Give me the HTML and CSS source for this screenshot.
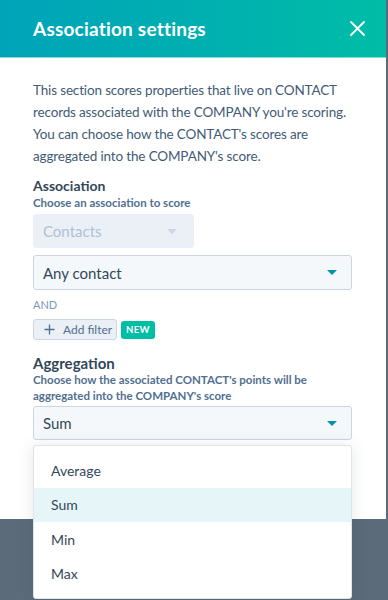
FILE: index.html
```html
<!DOCTYPE html>
<html lang="en">
<head>
    <meta charset="UTF-8">
    <meta name="viewport" content="width=device-width, initial-scale=1.0">
    <title>Association settings</title>
    <link rel="stylesheet" href="styles.css">
</head>
<body>

    <div class="panel">
        <header class="panel-header">
            <h1>Association settings</h1>
            <button class="close" aria-label="Close">
                <svg width="15" height="15" viewBox="0 0 15 15">
                    <path d="M1 1 L14 14 M14 1 L1 14" stroke="#fff" stroke-width="1.8" stroke-linecap="round"/>
                </svg>
            </button>
        </header>

        <section class="panel-body">
            <p class="intro">This section scores properties that live on CONTACT records associated with the COMPANY you're scoring. You can choose how the CONTACT's scores are aggregated into the COMPANY's score.</p>

            <h2 class="field-label">Association</h2>
            <p class="field-help">Choose an association to score</p>
            <div class="select select-disabled">
                <span>Contacts</span>
                <span class="caret"></span>
            </div>
            <div class="select select-any">
                <span>Any contact</span>
                <span class="caret"></span>
            </div>

            <p class="and">AND</p>
            <div class="filter-row">
                <button class="add-filter">
                    <svg width="11" height="11" viewBox="0 0 11 11">
                        <path d="M5.5 0.5 V10.5 M0.5 5.5 H10.5" stroke="#516f90" stroke-width="1.3"/>
                    </svg>
                    Add filter
                </button>
                <span class="badge">NEW</span>
            </div>

            <h2 class="field-label agg">Aggregation</h2>
            <p class="field-help">Choose how the associated CONTACT's points will be aggregated into the COMPANY's score</p>
            <div class="select-wrap">
                <div class="select select-sum">
                    <span>Sum</span>
                    <span class="caret"></span>
                </div>
                <!-- open dropdown menu -->
                <ul class="menu">
                    <li>Average</li>
                    <li class="active">Sum</li>
                    <li>Min</li>
                    <li>Max</li>
                </ul>
            </div>
        </section>
    </div>

</body>
</html>
```

FILE: styles.css
```css
html, body {
    height: 100%;
}

body {
    margin: 0;
    background-color: #5b6b79; /* dim overlay behind the panel */
    font-family: 'Lato', 'Noto Sans', sans-serif;
    color: #33475b;
}

.panel {
    width: 386px;
    height: 519px;
    background-color: #fff;
}

.panel-header {
    height: 58px;
    display: flex;
    align-items: center;
    justify-content: space-between;
    padding: 0 21px 0 33px;
    background: linear-gradient(90deg, #00a4b9 0%, #00b0b0 55%, #00bda6 100%);
    border-bottom: 1px solid #8ad9d2;
    box-sizing: border-box;
}

.panel-header h1 {
    margin: 0;
    color: #fff;
    font-size: 19px;
    font-weight: 700;
    letter-spacing: 0.2px;
}

.close {
    background: none;
    border: none;
    padding: 0;
    display: flex;
    cursor: pointer;
}

.panel-body {
    padding: 21px 34px 0 33px;
}

.intro {
    margin: 0;
    font-size: 13.5px;
    letter-spacing: -0.15px;
    line-height: 22px;
    color: #425b76;
}

.field-label {
    margin: 10px 0 0;
    font-size: 14px;
    font-weight: 700;
    color: #33475b;
    line-height: 18px;
}

.field-label.agg {
    margin-top: 14px;
    font-size: 15px;
}

.field-help {
    margin: 0;
    font-size: 11.5px;
    font-weight: 700;
    line-height: 16px;
    color: #516f90;
}

.select {
    height: 35px;
    display: flex;
    align-items: center;
    justify-content: space-between;
    padding: 0 14px 0 9px;
    background-color: #f5f8fa;
    border: 1px solid #cbd6e2;
    border-radius: 3px;
    box-sizing: border-box;
    font-size: 15px;
    color: #33475b;
}

.select-disabled {
    width: 161px;
    height: 34px;
    margin-top: 3px;
    background-color: #eaf0f6;
    border-color: #eaf0f6;
    color: #b0c1d4;
    padding-right: 16px;
}

.select-any {
    margin-top: 7px;
}

.select-sum {
    height: 34px;
    margin-top: 2px;
}

.caret {
    width: 0;
    height: 0;
    border-left: 5px solid transparent;
    border-right: 5px solid transparent;
    border-top: 5px solid #0091ae;
}

.select-disabled .caret {
    border-top-color: #cbd6e2;
}

.and {
    margin: 8px 0 0;
    font-size: 11px;
    line-height: 14px;
    color: #7c98b6;
}

.filter-row {
    margin-top: 7px;
    display: flex;
    align-items: center;
    gap: 4px;
}

.add-filter {
    height: 21px;
    width: 84px;
    padding: 0 0 0 10px;
    background-color: #eaf0f6;
    border: 1px solid #cbd6e2;
    border-radius: 3px;
    font-family: inherit;
    font-size: 12px;
    color: #516f90;
    display: flex;
    align-items: center;
    gap: 8px;
}

.badge {
    height: 18px;
    width: 34px;
    justify-content: center;
    display: flex;
    align-items: center;
    background-color: #00bda5;
    color: #fff;
    font-size: 9.5px;
    font-weight: 700;
    border-radius: 3px;
    letter-spacing: 0.4px;
}

.select-wrap {
    position: relative;
}

.menu {
    position: absolute;
    z-index: 10;
    top: 39px;
    left: 0;
    right: 0;
    margin: 0;
    padding: 7px 0;
    list-style: none;
    background-color: #fff;
    border: 1px solid #dfe3eb;
    border-radius: 3px;
    box-shadow: 0 1px 16px rgba(45, 62, 80, 0.12);
}

.menu li {
    height: 34.5px;
    display: flex;
    align-items: center;
    padding-left: 17px;
    font-size: 14px;
    color: #33475b;
}

.menu li.active {
    background-color: #e5f5f8;
}
```
